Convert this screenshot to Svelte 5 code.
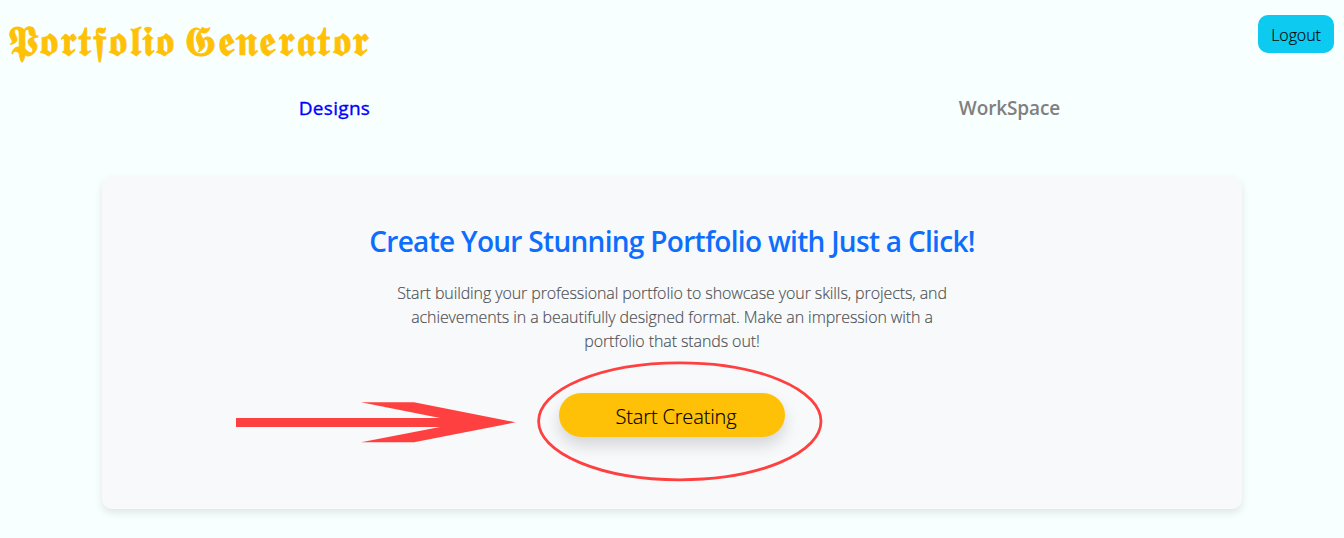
<script>
  const lines = [
    'Start building your professional portfolio to showcase your skills, projects, and',
    'achievements in a beautifully designed format. Make an impression with a',
    'portfolio that stands out!'
  ];
</script>

<div class="page">
  <header>
    <h1>𝕻𝖔𝖗𝖙𝖋𝖔𝖑𝖎𝖔 𝕲𝖊𝖓𝖊𝖗𝖆𝖙𝖔𝖗</h1>
    <button class="logout">Logout</button>
  </header>

  <nav>
    <a class="tab active" href="#designs">Designs</a>
    <a class="tab" href="#workspace">WorkSpace</a>
  </nav>

  <main>
    <h2>Create Your Stunning Portfolio with Just a Click!</h2>
    <p>
      {#each lines as line}
        <span>{line}</span>
      {/each}
    </p>
    <button class="start">Start Creating</button>
    <svg class="marks" width="600" height="130" viewBox="230 355 600 130" aria-hidden="true">
      <path d="M236 418H440L361 402.2H414L515.5 422.3L414 442.3H361L440 427H236Z" fill="#ff4040" />
      <ellipse cx="679.8" cy="421.3" rx="141.2" ry="58.5" fill="none" stroke="#ff4040" stroke-width="2.8" />
    </svg>
  </main>
</div>

<style>
  :global(body) {
    margin: 0;
    background: #f8ffff;
  }
  .page {
    box-sizing: border-box;
    height: 538px;
    overflow: hidden;
    background: #f8ffff;
    font-family: "Segoe UI", "Open Sans", "Noto Sans", sans-serif;
    color: #212529;
  }
  header {
    display: flex;
    justify-content: space-between;
    align-items: flex-start;
    height: 85px;
    padding: 15px 10px 0 8px;
    box-sizing: border-box;
  }
  h1 {
    margin: 1px 0 0;
    font: 500 42px/48px "Open Sans", "DejaVu Sans", sans-serif;
    letter-spacing: 1.3px;
    word-spacing: -3.5px;
    -webkit-text-stroke: 0.9px #ffc107;
    color: #ffc107;
    white-space: nowrap;
  }
  button {
    border: 0;
    margin: 0;
    font-family: inherit;
    font-weight: 300;
    color: #000;
  }
  .logout {
    width: 76px;
    height: 38px;
    padding: 2px 0 0;
    border-radius: 10px;
    background: #0dcaf0;
    font-size: 16px;
    line-height: 36px;
    letter-spacing: -0.1px;
    -webkit-text-stroke: 0.15px #000;
  }
  nav {
    display: grid;
    grid-template-columns: 1fr 1fr;
    height: 91px;
  }
  .tab {
    padding-left: 3px;
    text-align: center;
    font-size: 19px;
    line-height: 46px;
    font-weight: 600;
    letter-spacing: -0.1px;
    color: #808080;
    text-decoration: none;
  }
  .tab.active {
    padding: 0 3px 0 0;
    color: #0000ff;
    font-weight: 400;
    letter-spacing: 0.3px;
    -webkit-text-stroke: 0.35px #0000ff;
  }
  main {
    position: relative;
    box-sizing: border-box;
    width: 1140px;
    height: 333px;
    margin: 0 auto;
    padding-top: 48px;
    border-radius: 10px;
    background: #f8f9fa;
    box-shadow: 0 4px 8px rgba(0, 0, 0, 0.1);
    display: flex;
    flex-direction: column;
    align-items: center;
  }
  h2 {
    margin: 0 0 23px;
    font-size: 28px;
    line-height: 34px;
    font-weight: 600;
    letter-spacing: -0.7px;
    color: #0d6efd;
    white-space: nowrap;
  }
  p {
    margin: 0;
    font-size: 16px;
    line-height: 24px;
    font-weight: 300;
    letter-spacing: -0.1px;
    color: #4c4f53;
    -webkit-text-stroke: 0.15px #4c4f53;
    text-align: center;
  }
  p span {
    display: block;
    white-space: nowrap;
  }
  .start {
    width: 226px;
    height: 44px;
    margin-top: 40px;
    padding: 3px 0 0 8px;
    border-radius: 22px;
    background: #ffc107;
    box-shadow: 0 8px 16px rgba(0, 0, 0, 0.15);
    font-size: 20px;
    line-height: 41px;
    letter-spacing: -0.15px;
    -webkit-text-stroke: 0.15px #000;
  }
  .marks {
    position: absolute;
    left: 128px;
    top: 179px;
  }
</style>
